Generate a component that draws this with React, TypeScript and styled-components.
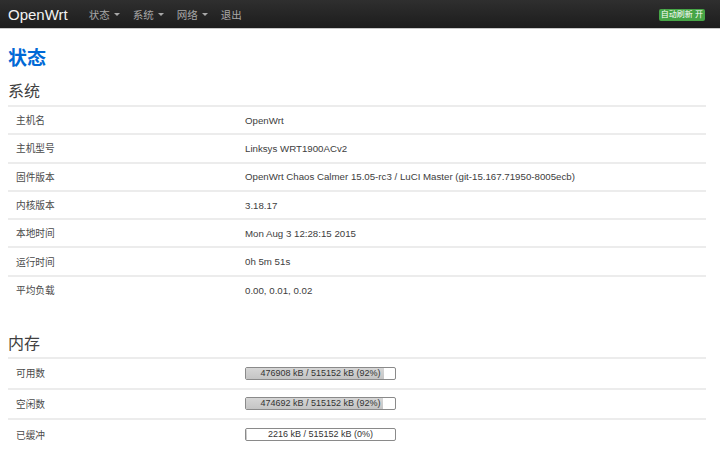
import React from 'react';
import styled, { createGlobalStyle } from 'styled-components';

const GlobalStyle = createGlobalStyle`
  html, body {
    margin: 0;
    padding: 0;
    background: #fff;
    font-family: "Liberation Sans", Arial, "Noto Sans CJK SC", sans-serif;
    color: #404040;
  }
`;

const NavBar = styled.div`
  height: 28px;
  background: linear-gradient(#2f2f2f, #1c1c1c);
  border-bottom: 1px solid #c8c8c8;
  display: flex;
  align-items: center;
  padding: 0 14px 0 8px;
`;

const Brand = styled.a`
  color: #f2f2f2;
  font-size: 15px;
  margin-right: 21px;
`;

const Menu = styled.ul`
  display: flex;
  list-style: none;
  margin: 0;
  padding: 0;
  gap: 13px;
  flex: 1;
`;

const MenuItem = styled.li`
  color: #a8a8a8;
  font-size: 10.5px;
  display: flex;
  align-items: center;
  gap: 4px;
`;

const Caret = styled.span`
  width: 0;
  height: 0;
  border-left: 3px solid transparent;
  border-right: 3px solid transparent;
  border-top: 3px solid #a8a8a8;
`;

const Badge = styled.span`
  background: #46a546;
  color: #fff;
  font-size: 8px;
  padding: 1px 2px;
  border-radius: 2px;
  line-height: 10px;
  margin-top: 2px;
  margin-right: 1px;
`;

const Main = styled.div`
  padding: 0 14px 0 8px;
`;

const Title = styled.h2`
  color: #0069d6;
  font-size: 19px;
  font-weight: bold;
  margin: 17px 0 0;
  line-height: 26px;
`;

const Section = styled.fieldset`
  border: 0;
  margin: 0;
  padding: 0;
`;

const Legend = styled.h3<{ $top: number }>`
  font-size: 16px;
  font-weight: normal;
  margin: ${(p) => p.$top}px 0 2px;
  line-height: 22px;
  color: #404040;
`;

const Table = styled.table`
  width: 100%;
  border-collapse: collapse;
`;

const Row = styled.tr<{ $h: number }>`
  height: ${(p) => p.$h}px;
  border-top: 2px solid #ececec;
`;

const Label = styled.td`
  width: 229px;
  padding: 0 0 0 8px;
  font-size: 9.7px;
  color: #4a4a4a;
`;

const Value = styled.td`
  padding: 0;
  font-size: 9.7px;
  color: #404040;
`;

const Bar = styled.div`
  position: relative;
  width: 149px;
  height: 11px;
  border: 1px solid #8a8a8a;
  border-radius: 2px;
  background: #fff;
  overflow: hidden;
  font-size: 9px;
  line-height: 11px;
  text-align: center;
  color: #333;
`;

const Fill = styled.div`
  position: absolute;
  left: 0;
  top: 0;
  bottom: 0;
  background: linear-gradient(#d6d6d6, #c4c4c4);
`;

const BarText = styled.span`
  position: relative;
`;

const system = [
  ['主机名', 'OpenWrt'],
  ['主机型号', 'Linksys WRT1900ACv2'],
  ['固件版本', 'OpenWrt Chaos Calmer 15.05-rc3 / LuCI Master (git-15.167.71950-8005ecb)'],
  ['内核版本', '3.18.17'],
  ['本地时间', 'Mon Aug 3 12:28:15 2015'],
  ['运行时间', '0h 5m 51s'],
  ['平均负载', '0.00, 0.01, 0.02'],
];

const memory = [
  { label: '可用数', used: 476908, pct: 92 },
  { label: '空闲数', used: 474692, pct: 92 },
  { label: '已缓冲', used: 2216, pct: 0 },
];

function ProgressBar({ used, pct }: { used: number; pct: number }) {
  return (
    <Bar>
      <Fill style={{ width: `${(used / 515152) * 100}%` }} />
      <BarText>
        {used} kB / 515152 kB ({pct}%)
      </BarText>
    </Bar>
  );
}

export default function App() {
  return (
    <>
      <GlobalStyle />
      <NavBar>
        <Brand>OpenWrt</Brand>
        <Menu>
          <MenuItem>
            状态 <Caret />
          </MenuItem>
          <MenuItem>
            系统 <Caret />
          </MenuItem>
          <MenuItem>
            网络 <Caret />
          </MenuItem>
          <MenuItem>退出</MenuItem>
        </Menu>
        <Badge>自动刷新 开</Badge>
      </NavBar>
      <Main>
        <Title>状态</Title>
        <Section>
          <Legend $top={9}>系统</Legend>
          <Table>
            <tbody>
              {system.map(([k, v]) => (
                <Row key={k} $h={28.3}>
                  <Label>{k}</Label>
                  <Value>{v}</Value>
                </Row>
              ))}
            </tbody>
          </Table>
        </Section>
        <Section>
          <Legend $top={29}>内存</Legend>
          <Table>
            <tbody>
              {memory.map((m) => (
                <Row key={m.label} $h={30.5}>
                  <Label>{m.label}</Label>
                  <Value>
                    <ProgressBar used={m.used} pct={m.pct} />
                  </Value>
                </Row>
              ))}
            </tbody>
          </Table>
        </Section>
      </Main>
    </>
  );
}
